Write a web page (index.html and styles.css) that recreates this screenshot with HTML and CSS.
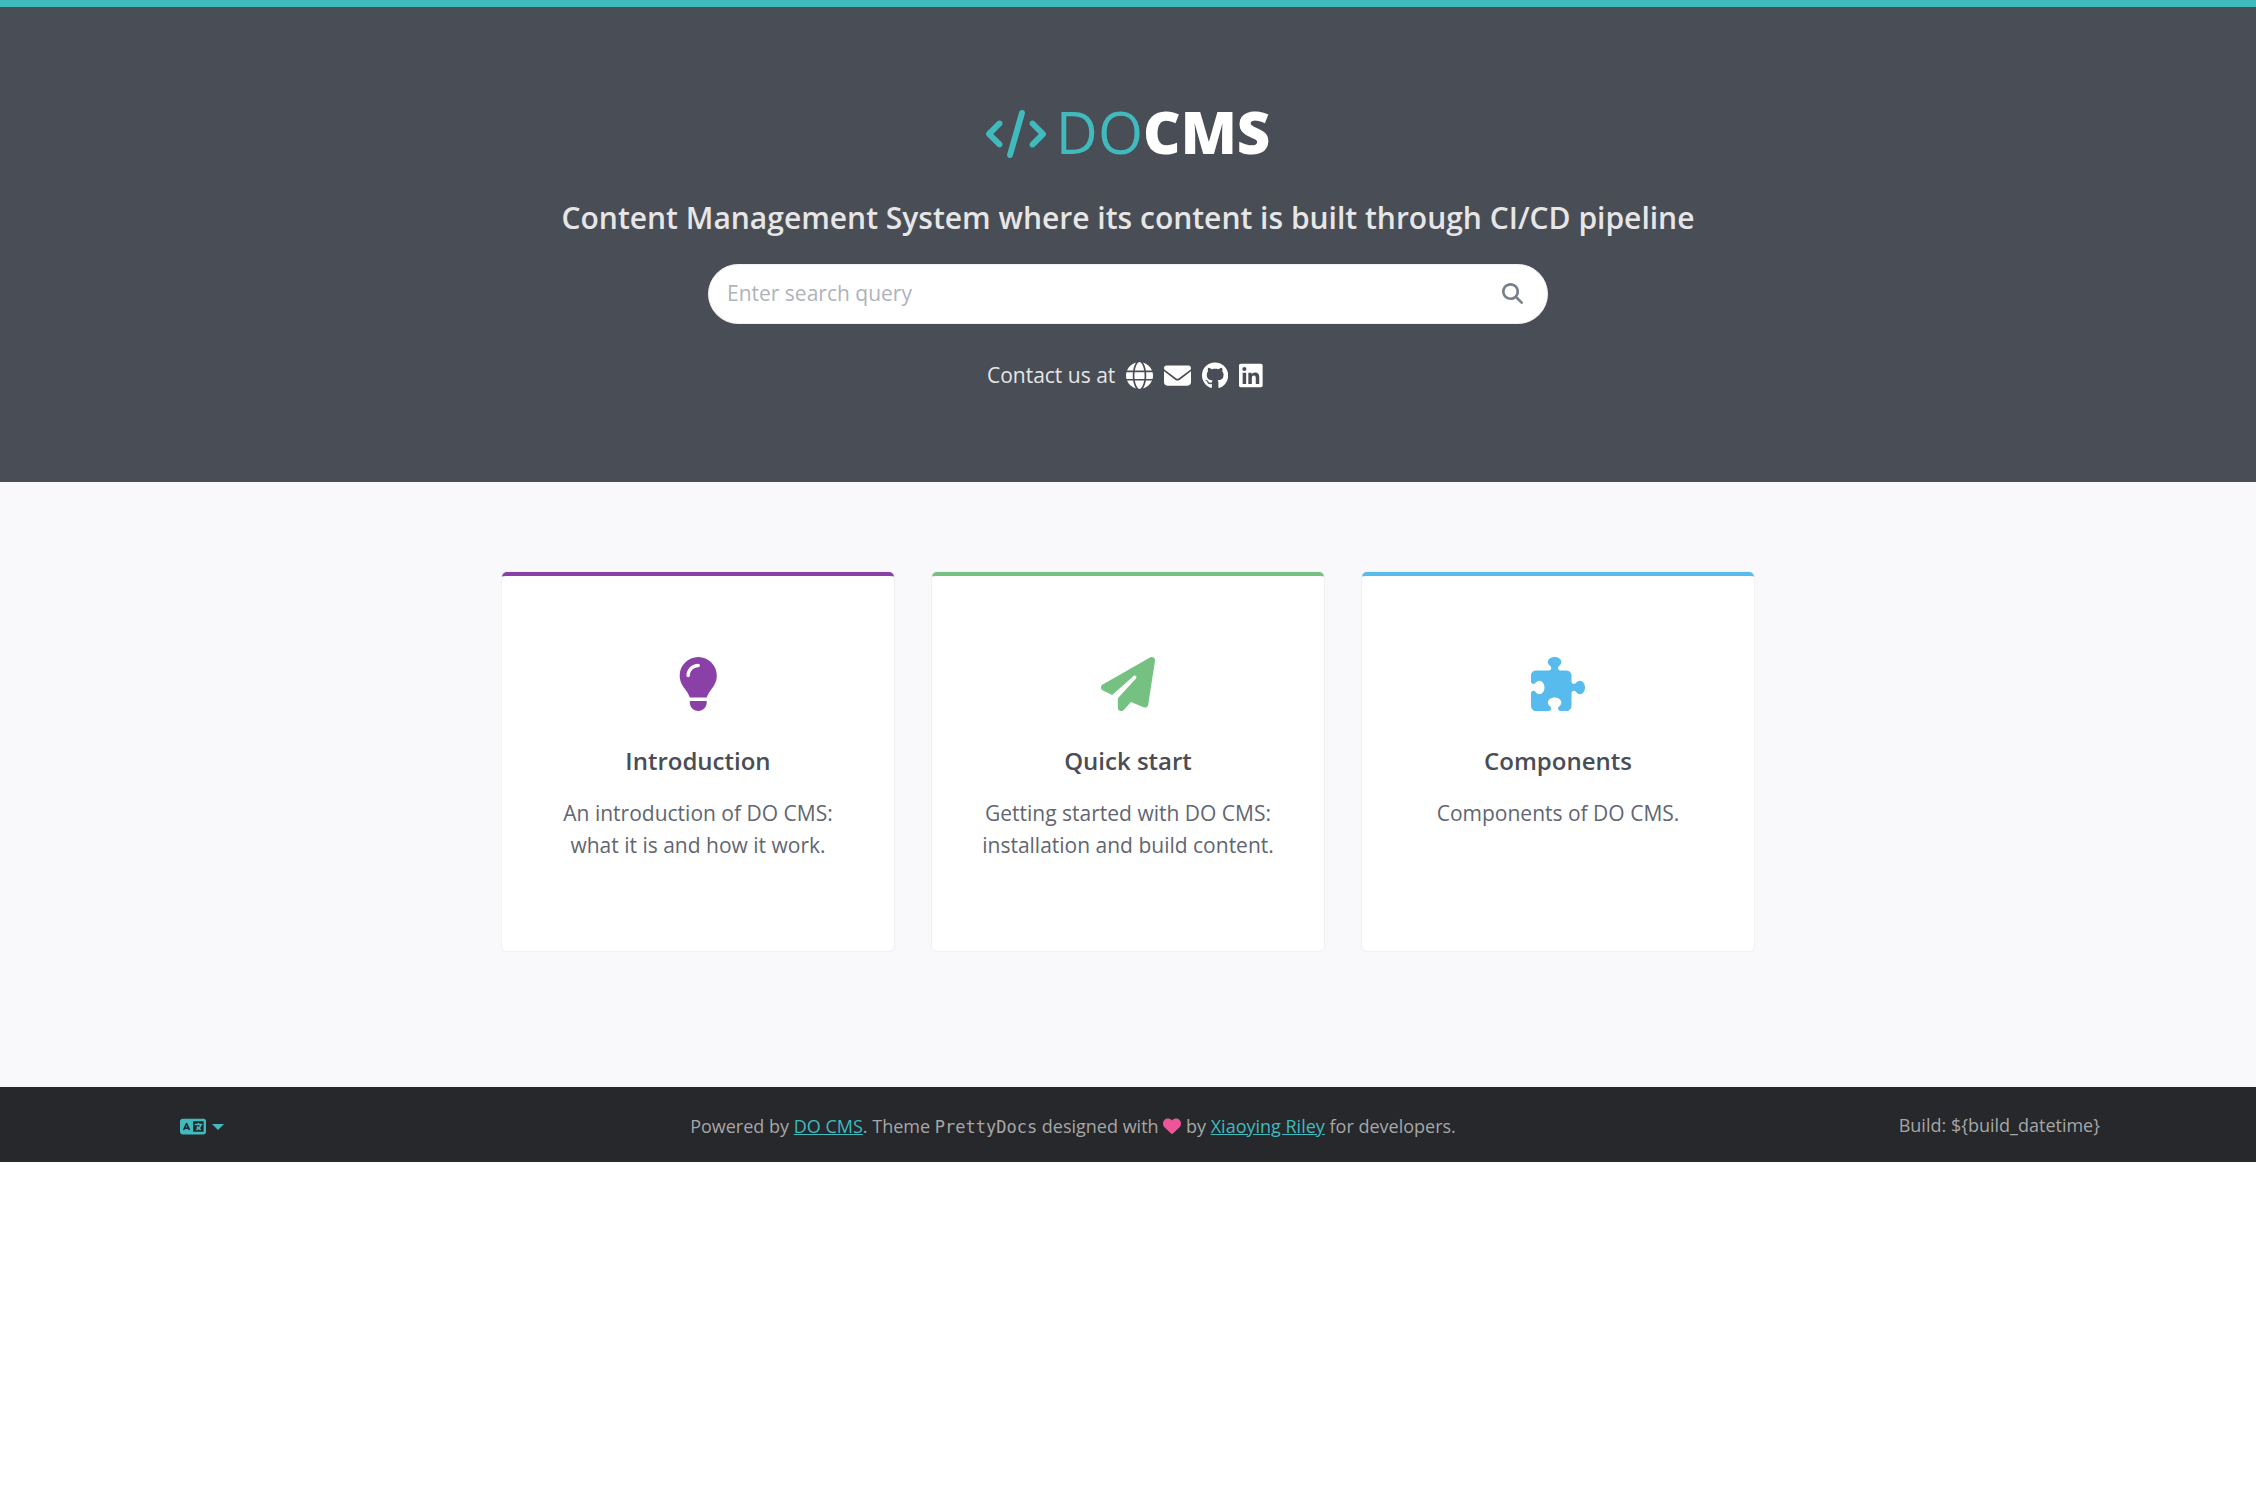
FILE: index.html
```html
<!DOCTYPE html>
<html lang="en">
<head>
<meta charset="utf-8">
<meta name="viewport" content="width=device-width, initial-scale=1">
<title>DO CMS</title>
<link rel="stylesheet" href="styles.css">
</head>
<body>
<header class="header">
  <h1 class="logo">
    <svg class="logo-icon" viewBox="0 0 640 512" aria-hidden="true"><path d="M392.8 1.2c-17-4.9-34.7 5-39.6 22l-128 448c-4.9 17 5 34.7 22 39.6s34.7-5 39.6-22l128-448c4.9-17-5-34.7-22-39.6zm80.6 120.1c-12.5 12.5-12.5 32.8 0 45.3L562.7 256l-89.4 89.4c-12.5 12.5-12.5 32.8 0 45.3s32.8 12.5 45.3 0l112-112c12.5-12.5 12.5-32.8 0-45.3l-112-112c-12.5-12.5-32.8-12.5-45.3 0zm-306.7 0c-12.5-12.5-32.8-12.5-45.3 0l-112 112c-12.5 12.5-12.5 32.8 0 45.3l112 112c12.5 12.5 32.8 12.5 45.3 0s12.5-32.8 0-45.3L77.3 256l89.4-89.4c12.5-12.5 12.5-32.8 0-45.3z"/></svg>
    <span class="logo-text"><span class="logo-light">DO</span><span class="logo-bold">CMS</span></span>
  </h1>
  <p class="tagline">Content Management System where its content is built through CI/CD pipeline</p>
  <form class="search">
    <input class="search-input" type="search" placeholder="Enter search query" aria-label="Enter search query">
    <button class="search-button" type="button" aria-label="Search">
      <svg class="search-icon" viewBox="0 0 512 512" aria-hidden="true"><path d="M416 208c0 45.9-14.9 88.3-40 122.7L502.6 457.4c12.5 12.5 12.5 32.8 0 45.3s-32.8 12.5-45.3 0L330.7 376c-34.4 25.2-76.8 40-122.7 40C93.1 416 0 322.9 0 208S93.1 0 208 0S416 93.1 416 208zM208 352a144 144 0 1 0 0-288 144 144 0 1 0 0 288z"/></svg>
    </button>
  </form>
  <div class="contact">
    <span>Contact us at</span>
    <nav class="contact-links" aria-label="Contact">
      <a href="#" aria-label="Website"><svg class="contact-icon" viewBox="0 0 512 512" aria-hidden="true"><path d="M352 256c0 22.2-1.2 43.6-3.3 64H163.3c-2.2-20.4-3.3-41.8-3.3-64s1.2-43.6 3.3-64H348.7c2.2 20.4 3.3 41.8 3.3 64zm28.8-64H503.9c5.3 20.5 8.1 41.9 8.1 64s-2.8 43.5-8.1 64H380.8c2.1-20.6 3.2-42 3.2-64s-1.1-43.4-3.2-64zm112.6-32H376.7c-10-63.9-29.8-117.4-55.3-151.6c78.3 20.7 142 77.5 171.9 151.6zm-149.1 0H167.7c6.1-36.4 15.5-68.6 27-94.7c10.5-23.6 22.2-40.7 33.5-51.5C239.4 3.2 248.7 0 256 0s16.6 3.2 27.8 13.8c11.3 10.8 23 27.9 33.5 51.5c11.6 26 20.9 58.2 27 94.7zm-209 0H18.6C48.6 85.9 112.2 29.1 190.6 8.4C165.1 42.6 145.3 96.1 135.3 160zM8.1 192H131.2c-2.1 20.6-3.2 42-3.2 64s1.1 43.4 3.2 64H8.1C2.8 299.5 0 278.1 0 256s2.8-43.5 8.1-64zM194.7 446.6c-11.6-26-20.9-58.2-27-94.6H344.3c-6.1 36.4-15.5 68.6-27 94.6c-10.5 23.6-22.2 40.7-33.5 51.5C272.6 508.8 263.3 512 256 512s-16.6-3.2-27.8-13.8c-11.3-10.8-23-27.9-33.5-51.5zM135.3 352c10 63.9 29.8 117.4 55.3 151.6C112.2 482.9 48.6 426.1 18.6 352H135.3zm358.1 0c-30 74.1-93.6 130.9-171.9 151.6c25.5-34.2 45.2-87.7 55.3-151.6H493.4z"/></svg></a>
      <a href="#" aria-label="Email"><svg class="contact-icon" viewBox="0 0 512 512" aria-hidden="true"><path d="M48 64C21.5 64 0 85.5 0 112c0 15.1 7.1 29.3 19.2 38.4L236.8 313.6c11.4 8.5 27 8.5 38.4 0L492.8 150.4c12.1-9.1 19.2-23.3 19.2-38.4c0-26.5-21.5-48-48-48H48zM0 176V384c0 35.3 28.7 64 64 64H448c35.3 0 64-28.7 64-64V176L294.4 339.2c-22.8 17.1-54 17.1-76.8 0L0 176z"/></svg></a>
      <a href="#" aria-label="GitHub"><svg class="contact-icon" viewBox="0 0 496 512" aria-hidden="true"><path d="M165.9 397.4c0 2-2.3 3.6-5.2 3.6-3.3.3-5.6-1.3-5.6-3.6 0-2 2.3-3.6 5.2-3.6 3-.3 5.6 1.3 5.6 3.6zm-31.1-4.5c-.7 2 1.3 4.3 4.3 4.9 2.6 1 5.6 0 6.2-2s-1.3-4.3-4.3-5.2c-2.6-.7-5.5.3-6.2 2.3zm44.2-1.7c-2.9.7-4.9 2.6-4.6 4.9.3 2 2.9 3.3 5.9 2.6 2.9-.7 4.9-2.6 4.6-4.6-.3-1.9-3-3.2-5.9-2.9zM244.8 8C106.1 8 0 113.3 0 252c0 110.9 69.8 205.8 169.5 239.2 12.8 2.3 17.3-5.6 17.3-12.1 0-6.2-.3-40.4-.3-61.4 0 0-70 15-84.7-29.8 0 0-11.4-29.1-27.8-36.6 0 0-22.9-15.7 1.6-15.4 0 0 24.9 2 38.6 25.8 21.9 38.6 58.6 27.5 72.9 20.9 2.3-16 8.8-27.1 16-33.7-55.9-6.2-112.3-14.3-112.3-110.5 0-27.5 7.6-41.3 23.6-58.9-2.6-6.5-11.1-33.3 2.6-67.9 20.9-6.5 69 27 69 27 20-5.6 41.5-8.5 62.8-8.5s42.8 2.9 62.8 8.5c0 0 48.1-33.6 69-27 13.7 34.7 5.2 61.4 2.6 67.9 16 17.7 25.8 31.5 25.8 58.9 0 96.5-58.9 104.2-114.8 110.5 9.2 7.9 17 22.9 17 46.4 0 33.7-.3 75.4-.3 83.6 0 6.5 4.6 14.4 17.3 12.1C428.2 457.8 496 362.9 496 252 496 113.3 383.5 8 244.8 8zM97.2 352.9c-1.3 1-1 3.3.7 5.2 1.6 1.6 3.9 2.3 5.2 1 1.3-1 1-3.3-.7-5.2-1.6-1.6-3.9-2.3-5.2-1zm-10.8-8.1c-.7 1.3.3 2.9 2.3 3.9 1.6 1 3.6.7 4.3-.7.7-1.3-.3-2.9-2.3-3.9-2-.6-3.6-.3-4.3.7zm32.4 35.6c-1.6 1.3-1 4.3 1.3 6.2 2.3 2.3 5.2 2.6 6.5 1 1.3-1.3.7-4.3-1.3-6.2-2.2-2.3-5.2-2.6-6.5-1zm-11.4-14.7c-1.6 1-1.6 3.6 0 5.9 1.6 2.3 4.3 3.3 5.6 2.3 1.6-1.3 1.6-3.9 0-6.2-1.4-2.3-4-3.3-5.6-2z"/></svg></a>
      <a href="#" aria-label="LinkedIn"><svg class="contact-icon" viewBox="0 0 448 512" aria-hidden="true"><path d="M416 32H31.9C14.3 32 0 46.5 0 64.3v383.4C0 465.5 14.3 480 31.9 480H416c17.6 0 32-14.5 32-32.3V64.3c0-17.8-14.4-32.3-32-32.3zM135.4 416H69V202.2h66.5V416zm-33.2-243c-21.3 0-38.5-17.3-38.5-38.5S80.9 96 102.2 96c21.2 0 38.5 17.3 38.5 38.5 0 21.3-17.2 38.5-38.5 38.5zm282.1 243h-66.4V312c0-24.8-.5-56.7-34.5-56.7-34.6 0-39.9 27-39.9 54.9V416h-66.4V202.2h63.7v29.2h.9c8.9-16.8 30.6-34.5 62.9-34.5 67.2 0 79.7 44.3 79.7 101.9V416z"/></svg></a>
    </nav>
  </div>
</header>

<main class="main">
  <div class="cards">
    <a class="card card-purple" href="#">
      <svg class="card-icon" viewBox="0 0 384 512" aria-hidden="true"><path d="M272 384c9.6-31.9 29.5-59.1 49.2-86.2l0 0c5.2-7.1 10.4-14.2 15.4-21.4c19.8-28.5 31.4-63 31.4-100.3C368 78.8 289.2 0 192 0S16 78.8 16 176c0 37.3 11.6 71.9 31.4 100.3c5 7.2 10.2 14.3 15.4 21.4l0 0c19.8 27.1 39.7 54.4 49.2 86.2H272zM192 512c44.2 0 80-35.8 80-80V416H112v16c0 44.2 35.8 80 80 80zM112 176c0 8.8-7.2 16-16 16s-16-7.2-16-16c0-61.9 50.1-112 112-112c8.8 0 16 7.2 16 16s-7.2 16-16 16c-44.2 0-80 35.8-80 80z"/></svg>
      <h2 class="card-title">Introduction</h2>
      <p class="card-text">An introduction of DO CMS: what it is and how it work.</p>
    </a>
    <a class="card card-green" href="#">
      <svg class="card-icon" viewBox="0 0 512 512" aria-hidden="true"><path d="M498.1 5.6c10.1 7 15.4 19.1 13.5 31.2l-64 416c-1.5 9.7-7.4 18.2-16 23s-18.9 5.4-28 1.6L284 427.7l-68.5 74.1c-8.9 9.7-22.9 12.9-35.2 8.1S160 493.2 160 480V396.4c0-4 1.5-7.8 4.2-10.7L331.8 202.8c5.8-6.3 5.6-16-.4-22s-15.7-6.4-22-.7L106 360.8 17.7 316.6C7.1 311.3 .3 300.7 0 288.9s5.9-22.8 16.1-28.7l448-256c10.7-6.1 23.9-5.5 34 1.4z"/></svg>
      <h2 class="card-title">Quick start</h2>
      <p class="card-text">Getting started with DO CMS: installation and build content.</p>
    </a>
    <a class="card card-blue" href="#">
      <svg class="card-icon" viewBox="0 0 512 512" aria-hidden="true"><path d="M192 104.8c0-9.2-5.8-17.3-13.2-22.8C167.2 73.3 160 61.3 160 48c0-26.5 28.7-48 64-48s64 21.5 64 48c0 13.3-7.2 25.3-18.8 34c-7.4 5.5-13.2 13.6-13.2 22.8v0c0 12.8 10.4 23.2 23.2 23.2H336c26.5 0 48 21.5 48 48v56.8c0 12.8 10.4 23.2 23.2 23.2v0c9.2 0 17.3-5.8 22.8-13.2c8.7-11.6 20.7-18.8 34-18.8c26.5 0 48 28.7 48 64s-21.5 64-48 64c-13.3 0-25.3-7.2-34-18.8c-5.5-7.4-13.6-13.2-22.8-13.2v0c-12.8 0-23.2 10.4-23.2 23.2V464c0 26.5-21.5 48-48 48H279.2c-12.8 0-23.2-10.4-23.2-23.2v0c0-9.2 5.8-17.3 13.2-22.8c11.6-8.7 18.8-20.7 18.8-34c0-26.5-28.7-48-64-48s-64 21.5-64 48c0 13.3 7.2 25.3 18.8 34c7.4 5.5 13.2 13.6 13.2 22.8v0c0 12.8-10.4 23.2-23.2 23.2H48c-26.5 0-48-21.5-48-48V343.2C0 330.4 10.4 320 23.2 320v0c9.2 0 17.3 5.8 22.8 13.2C54.7 344.8 66.7 352 80 352c26.5 0 48-28.7 48-64s-21.5-64-48-64c-13.3 0-25.3 7.2-34 18.8C40.5 250.2 32.4 256 23.2 256v0C10.4 256 0 245.6 0 232.8V176c0-26.5 21.5-48 48-48H168.8c12.8 0 23.2-10.4 23.2-23.2v0z"/></svg>
      <h2 class="card-title">Components</h2>
      <p class="card-text">Components of DO CMS.</p>
    </a>
  </div>
</main>

<footer class="footer">
  <button class="language" type="button" aria-label="Language">
    <svg class="language-icon" viewBox="0 0 640 512" aria-hidden="true"><path d="M0 128C0 92.7 28.7 64 64 64H256h48 16H576c35.3 0 64 28.7 64 64V384c0 35.3-28.7 64-64 64H320 304 256 64c-35.3 0-64-28.7-64-64V128zm320 0V384H576V128H320zM178.3 175.9c-3.2-7.2-10.4-11.9-18.3-11.9s-15.1 4.7-18.3 11.9l-64 144c-4.5 10.1 .1 21.9 10.2 26.4s21.9-.1 26.4-10.2l8.9-20.1h73.6l8.9 20.1c4.5 10.1 16.3 14.6 26.4 10.2s14.6-16.3 10.2-26.4l-64-144zM160 233.2L179 276H141l19-42.8zM448 164c11 0 20 9 20 20v4h44 16c11 0 20 9 20 20s-9 20-20 20h-2l-1.6 4.5c-8.9 24.4-22.4 46.6-39.6 65.4c.9 .6 1.8 1.1 2.7 1.6l18.9 11.3c9.5 5.7 12.5 18 6.9 27.4s-18 12.5-27.4 6.9l-18.9-11.3c-4.5-2.7-8.8-5.5-13.1-8.5c-10.6 7.5-21.9 14-34 19.4l-3.6 1.6c-10.1 4.5-21.9-.1-26.4-10.2s.1-21.9 10.2-26.4l3.6-1.6c6.4-2.9 12.6-6.1 18.5-9.8l-12.2-12.2c-7.8-7.8-7.8-20.5 0-28.3s20.5-7.8 28.3 0l14.6 14.6 .5 .5c12.4-13.1 22.5-28.3 29.8-45H448 376c-11 0-20-9-20-20s9-20 20-20h52v-4c0-11 9-20 20-20z"/></svg>
    <span class="caret"></span>
  </button>
  <small class="credit">Powered by <a class="link" href="#">DO CMS</a>. Theme <code class="theme">PrettyDocs</code> designed with <svg class="heart" viewBox="0 0 512 512" role="img" aria-label="love"><path d="M47.6 300.4L228.3 469.1c7.5 7 17.4 10.9 27.7 10.9s20.2-3.9 27.7-10.9L464.4 300.4c30.4-28.3 47.6-68 47.6-109.5v-5.8c0-69.9-50.5-129.5-119.4-141C347 36.5 300.6 51.4 268 84L256 96 244 84c-32.6-32.6-79-47.5-124.6-39.9C50.5 55.6 0 115.2 0 185.1v5.8c0 41.5 17.2 81.2 47.6 109.5z"/></svg> by <a class="link" href="#">Xiaoying Riley</a> for developers.</small>
  <small class="build">Build: ${build_datetime}</small>
</footer>
</body>
</html>
```
FILE: styles.css
```css
* {
  box-sizing: border-box;
}

body {
  margin: 0;
  background: #fff;
  color: #494d55;
  font-family: "Open Sans", "Noto Sans", sans-serif;
  font-size: 21px;
  line-height: 32px;
}

h1,
h2,
p {
  margin: 0;
}

svg {
  fill: currentColor;
}

.header {
  display: flex;
  flex-direction: column;
  align-items: center;
  padding: 85px 20px 91px;
  border-top: 7px solid #40babd;
  background: #494d55;
  color: #e6e6e6;
}

.logo {
  display: flex;
  align-items: center;
  gap: 10px;
  color: #40babd;
  font-size: 58px;
  line-height: 80px;
}

.logo-icon {
  height: 48px;
  margin-top: 4px;
}

.logo-light {
  font-weight: 400;
}

.logo-bold {
  color: #fff;
  font-weight: 800;
}

.tagline {
  margin-top: 26px;
  font-size: 30px;
  font-weight: 600;
  line-height: 40px;
  text-align: center;
}

.search {
  display: flex;
  align-items: center;
  width: 100%;
  max-width: 840px;
  height: 60px;
  margin-top: 26px;
  padding-bottom: 2px;
  border: 1px solid #f0f0f0;
  border-radius: 30px;
  background: #fff;
}

.search-input {
  flex: 1;
  min-width: 0;
  padding: 0 18px;
  border: 0;
  outline: 0;
  background: transparent;
  color: #494d55;
  font: inherit;
}

.search-input::placeholder {
  color: #afb3bb;
  opacity: 1;
}

.search-button {
  display: flex;
  padding: 10px 24px;
  border: 0;
  background: transparent;
  color: #797f8b;
}

.search-icon {
  width: 21px;
  height: 21px;
}

.contact {
  display: flex;
  align-items: center;
  gap: 11px;
  margin-top: 35px;
  padding-right: 6px;
}

.contact-links {
  display: flex;
  gap: 11px;
}

.contact-links a {
  display: flex;
  color: #fff;
}

.contact-icon {
  height: 27px;
}

.main {
  padding: 90px 20px 136px;
  background: #f9f9fb;
}

.cards {
  display: grid;
  grid-template-columns: repeat(3, 1fr);
  gap: 38px;
  max-width: 1252px;
  margin: 0 auto;
}

.card {
  display: flex;
  flex-direction: column;
  align-items: center;
  padding: 81px 40px 90px;
  border-top: 4px solid;
  border-radius: 5px;
  background: #fff;
  box-shadow: 0 0 1px 1px #f0f0f0;
  text-align: center;
  text-decoration: none;
}

.card-purple {
  color: #8a40a7;
}

.card-green {
  color: #75c181;
}

.card-blue {
  color: #58bbee;
}

.card-icon {
  height: 54px;
}

.card-title {
  margin-top: 34px;
  color: #494d55;
  font-size: 24px;
  font-weight: 600;
  line-height: 32px;
}

.card-text {
  margin-top: 20px;
  color: #616670;
}

.footer {
  display: flex;
  justify-content: space-between;
  align-items: center;
  min-height: 75px;
  padding: 4px 156px 0;
  background: #26282c;
  color: #a6a6a6;
  font-size: 18px;
  line-height: 28px;
}

.credit,
.build {
  font-size: inherit;
}

.build {
  padding-bottom: 4px;
}

.language {
  display: flex;
  align-items: center;
  gap: 6px;
  padding: 0 23px 0 24px;
  border: 0;
  background: transparent;
  color: #40babd;
}

.language-icon {
  height: 21px;
}

.caret {
  border-top: 6px solid;
  border-right: 6px solid transparent;
  border-left: 6px solid transparent;
}

.link {
  color: #40babd;
}

.theme {
  font-family: "DejaVu Sans Mono", monospace;
  font-size: 17px;
}

.heart {
  height: 18px;
  vertical-align: -2px;
  color: #ec5598;
}
```
